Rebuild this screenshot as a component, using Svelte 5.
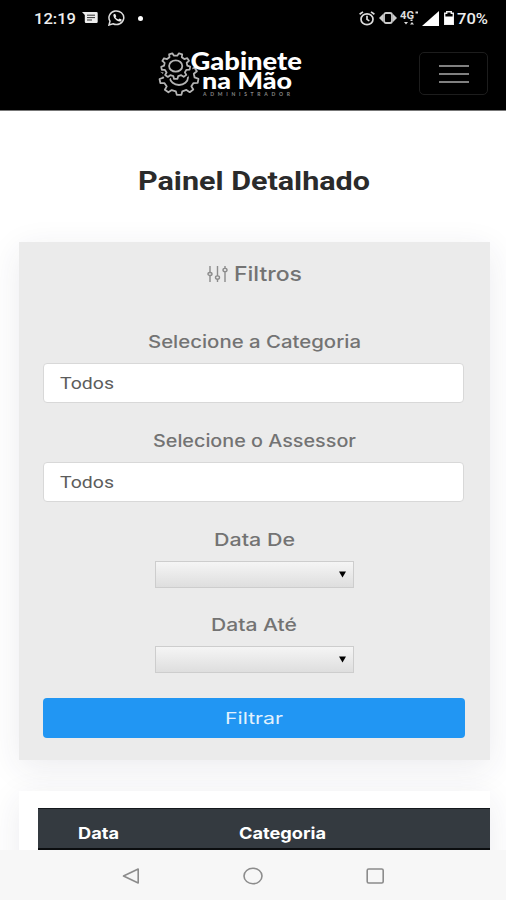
<script lang="ts">
	type Filter = { id: string; label: string; width: number };

	const categories: Filter[] = [
		{ id: 'categoria', label: 'Selecione a Categoria', width: 213 },
		{ id: 'assessor', label: 'Selecione o Assessor', width: 203 }
	];

	const dates: Filter[] = [
		{ id: 'de', label: 'Data De', width: 81 },
		{ id: 'ate', label: 'Data Até', width: 86 }
	];

	// Outline of a gear: each tooth is a quarter-step ramp up, flat, ramp down, flat.
	function gear(cx: number, cy: number, rx: number, ry: number, teeth: number, turn = 0) {
		const step = (Math.PI * 2) / teeth;
		const points: string[] = [];
		for (let i = 0; i < teeth; i++) {
			for (const [offset, scale] of [[-0.3, 0.8], [-0.17, 1], [0.17, 1], [0.3, 0.8]]) {
				const a = (i + offset) * step + turn;
				const x = cx + Math.cos(a) * rx * scale;
				const y = cy + Math.sin(a) * ry * scale;
				points.push(`${x.toFixed(2)} ${y.toFixed(2)}`);
			}
		}
		return `M${points.join('L')}Z`;
	}
</script>

{#snippet wide(text: string, width: number)}
	<svg class="wide" {width} height="20" aria-label={text}>
		<text x="0" y="16" textLength={width} lengthAdjust="spacingAndGlyphs">{text}</text>
	</svg>
{/snippet}

<div class="screen">
	<header>
		<div class="status">
			<div class="status-left">
				<span class="clock">{@render wide('12:19', 42)}</span>
				<svg class="message" width="16" height="12" viewBox="0 0 16 12">
					<path fill="#eee" d="M0 0h14.5q1.2 0 1.2 1.2v8.6q0 1.2-1.2 1.2H4q-1.2 0-1.2-1.2V3z" />
					<path stroke="#333" stroke-width="1" d="M5 3.2h8M5 5.6h8M5 8h5" />
				</svg>
				<svg class="whatsapp" width="18" height="16" viewBox="0 0 18 16" fill="none">
					<path stroke="#ddd" stroke-width="1.5" d="M1 15l1-3.8a7.4 6.8 0 1 1 3 2.6z" />
					<path fill="#eee" d="M5.6 4.2l1.5-.4 1.2 2.4-.8 1q1 1.7 3 2.4l1-1 2.2 1-.3 1.4q-1.5 1.3-4.6-.4Q5.3 8.2 5.3 5.6z" />
				</svg>
				<i class="dot"></i>
			</div>
			<div class="status-right">
				<svg width="16" height="15" viewBox="0 0 16 15" fill="none" stroke="#ddd" stroke-width="1.7">
					<ellipse cx="8" cy="8.2" rx="6" ry="5.4" />
					<path d="M.6 3.2L4 .9M15.4 3.2L12 .9M8 4.8v3.6l2.3 1.5" />
				</svg>
				<svg class="vibrate" width="18" height="12" viewBox="0 0 18 12" fill="none" stroke="#ccc">
					<rect x="5" y="1" width="8" height="10" rx="2" stroke-width="1.8" />
					<path fill="#ccc" stroke="none" d="M0 6l4-4v8zM18 6l-4-4v8z" />
				</svg>
				<svg class="network" width="20" height="16" viewBox="0 0 20 16" fill="#ddd">
					<text x="0" y="8.5" textLength="14" lengthAdjust="spacingAndGlyphs">4G</text>
					<path d="M15.5 1.5h2.5v2h-2.5zM4 12h4l-2 2.6zM10 14.6l2-2.6 2 2.6zM10.5 9.5h2v1.5h-2z" />
				</svg>
				<svg class="signal" width="17" height="15" viewBox="0 0 17 15">
					<path fill="#fff" d="M17 0v15H0z" />
				</svg>
				<svg class="battery" width="10" height="14" viewBox="0 0 10 14">
					<path fill="none" stroke="#eee" stroke-width="1.4" d="M.7 2.2h2V.7h4.6v1.5h2v11H.7z" />
					<path fill="#fff" d="M1 5.5h8V13H1z" />
				</svg>
				<span class="clock">{@render wide('70%', 31)}</span>
			</div>
		</div>

		<nav>
			<svg class="logo" width="146" height="58" viewBox="158 44 146 58" aria-label="Gabinete na Mão">
				<g fill="#000" stroke="#b4b4b4" stroke-width="1.8" stroke-linejoin="round">
					<path d={gear(179, 78, 19.5, 17, 9, 0.17)} />
					<ellipse cx="179" cy="77.5" rx="9" ry="7.5" />
					<path stroke="#000" stroke-width="5" d={gear(175.7, 66, 14.5, 13, 9, 0.17)} />
					<path d={gear(175.7, 66, 14.5, 13, 9, 0.17)} />
					<ellipse cx="175.7" cy="66" rx="6.6" ry="5.7" />
				</g>
				<text class="name" x="190.5" y="69.7" textLength="111.5" lengthAdjust="spacingAndGlyphs">Gabinete</text>
				<text class="name second" x="202" y="89" textLength="90" lengthAdjust="spacingAndGlyphs">na Mão</text>
				<text class="role" x="203" y="96" textLength="87" lengthAdjust="spacing">ADMINISTRADOR</text>
			</svg>
			<button class="toggler" type="button" aria-label="Menu">
				<i></i><i></i><i></i>
			</button>
		</nav>
	</header>

	<main>
		<h1>{@render wide('Painel Detalhado', 232)}</h1>

		<section class="card filters">
			<h2>
				<svg width="22" height="18" viewBox="0 0 22 18" fill="#ebebeb" stroke="#8c8c8c" stroke-width="1.4">
					<path d="M3 0v16M10.500 0v16M18 0v16" />
					<ellipse cx="3" cy="8" rx="2" ry="1.500" />
					<ellipse cx="10.500" cy="11.500" rx="2" ry="1.600" />
					<ellipse cx="18" cy="4" rx="2" ry="1.600" />
				</svg>
				{@render wide('Filtros', 68)}
			</h2>

			{#each categories as item (item.id)}
				<div class="field">
					<div class="label">{@render wide(item.label, item.width)}</div>
					<div class="control">{@render wide('Todos', 54)}</div>
				</div>
			{/each}

			{#each dates as item (item.id)}
				<div class="field date">
					<div class="label">{@render wide(item.label, item.width)}</div>
					<div class="picker">
						<svg width="7" height="7" viewBox="0 0 7 7"><path d="M0 .5h7l-3.500 6z" /></svg>
					</div>
				</div>
			{/each}

			<button class="submit" type="button">{@render wide('Filtrar', 58)}</button>
		</section>

		<section class="card results">
			<div class="thead">
				<div class="th first">{@render wide('Data', 41)}</div>
				<div class="th">{@render wide('Categoria', 87)}</div>
			</div>
		</section>
	</main>

	<footer>
		<svg width="18" height="18" viewBox="0 0 18 18"><path d="M1.5 9L16.200 2v14z" /></svg>
		<svg width="20" height="18" viewBox="0 0 20 18"><ellipse cx="10" cy="9" rx="9" ry="7.8" /></svg>
		<svg width="19" height="18" viewBox="0 0 19 18"><rect x="1.200" y="2" width="16" height="14" rx="1.5" /></svg>
	</footer>
</div>

<style>
	:global(body) {
		margin: 0;
	}

	.screen {
		display: flex;
		flex-direction: column;
		width: 506px;
		height: 900px;
		overflow: hidden;
		background: #fff;
		font-family: Inter, 'Open Sans', sans-serif;
	}

	svg {
		display: block;
		flex: none;
	}

	.wide {
		overflow: visible;
		fill: currentColor;
	}

	header {
		height: 110px;
		flex: none;
		background: #000;
		border-bottom: 1px solid #777;
	}

	.status {
		display: flex;
		justify-content: space-between;
		height: 36px;
		padding: 0 18px 0 34px;
	}

	.status-left,
	.status-right {
		display: flex;
		align-items: center;
	}

	.clock {
		font: 500 15.5px Roboto, sans-serif;
		color: #eee;
	}

	.message {
		margin-left: 6px;
	}

	.whatsapp {
		margin-left: 10px;
	}

	.dot {
		width: 5px;
		height: 5px;
		margin-left: 12px;
		border-radius: 50%;
		background: #fff;
	}

	.vibrate {
		margin-left: 4px;
	}

	.network {
		margin-left: 3px;
		font: 700 10px Roboto, sans-serif;
	}

	.signal {
		margin-left: 2px;
	}

	.battery {
		margin: 0 3px 0 5px;
	}

	nav {
		display: flex;
		justify-content: space-between;
		padding: 8px 18px 0 158px;
	}

	.name {
		font: 900 24.5px Lato, sans-serif;
		fill: #fff;
	}

	.second {
		font-size: 23px;
	}

	.role {
		font: 700 5px Lato, sans-serif;
		fill: #888;
	}

	.toggler {
		display: flex;
		flex-direction: column;
		align-items: center;
		justify-content: center;
		gap: 6px;
		box-sizing: border-box;
		width: 69px;
		height: 43px;
		margin-top: 8px;
		padding: 0;
		background: none;
		border: 1px solid #1d1d1d;
		border-radius: 5px;
	}

	.toggler i {
		width: 30px;
		height: 2px;
		background: #808080;
	}

	main {
		flex: 1;
		min-height: 0;
		overflow: hidden;
	}

	h1 {
		display: flex;
		justify-content: center;
		margin: 0;
		padding: 63px 0 48px 1px;
		font: 700 26px Roboto, sans-serif;
		color: #2b2b2b;
	}

	.card {
		width: 471px;
		margin: 0 auto 0 19px;
		box-sizing: border-box;
		box-shadow: 0 8px 32px rgba(40, 40, 80, 0.09);
	}

	.filters {
		height: 518px;
		padding: 22.5px 25px 0 24px;
		background: #ebebeb;
	}

	h2 {
		display: flex;
		align-items: center;
		justify-content: center;
		gap: 5px;
		margin: 0 0 47px;
		font-size: 19.5px;
		font-weight: 500;
		color: #737373;
	}

	.field {
		display: flex;
		flex-direction: column;
		align-items: center;
		margin-bottom: 27.5px;
	}

	.label {
		margin-bottom: 11.5px;
		font-size: 17px;
		font-weight: 500;
		color: #737373;
	}

	.control {
		display: flex;
		align-items: center;
		box-sizing: border-box;
		width: 421px;
		height: 40px;
		padding-left: 16px;
		background: #fff;
		border: 1px solid #d8d8d8;
		border-radius: 4px;
		font: 400 16.5px Roboto, sans-serif;
		color: #5c5c5c;
		margin-left: -1px;
	}

	.date {
		margin-bottom: 26.5px;
	}

	.date:nth-last-child(2) {
		margin-bottom: 25px;
	}

	.picker {
		display: flex;
		align-items: center;
		justify-content: flex-end;
		box-sizing: border-box;
		width: 199px;
		height: 27px;
		padding-right: 7px;
		background: linear-gradient(#f5f5f5, #dedede);
		border: 1px solid #cdcdcd;
	}

	.submit {
		display: flex;
		align-items: center;
		justify-content: center;
		width: 422px;
		height: 40px;
		padding: 0;
		background: #2196f3;
		border: 0;
		border-radius: 4px;
		font: 400 16.5px Inter, sans-serif;
		color: #e2f1fd;
	}

	.results {
		height: 120px;
		margin-top: 31px;
		padding: 17px 0 0 19px;
		background: #fff;
	}

	.thead {
		display: flex;
		box-sizing: border-box;
		height: 42px;
		padding: 14px 0 0 40px;
		background: #343a40;
		border-top: 1px solid #15191d;
		border-bottom: 2px solid #0b0d0f;
		font: 700 16px Inter, sans-serif;
		color: #fff;
	}

	.first {
		width: 161px;
	}

	footer {
		display: flex;
		align-items: center;
		gap: 103px;
		box-sizing: border-box;
		height: 50px;
		flex: none;
		padding: 1px 0 0 122px;
		background: #f7f7f7;
	}

	footer svg {
		fill: none;
		stroke: #8c8c8c;
		stroke-width: 1.6;
		stroke-linejoin: round;
	}
</style>
